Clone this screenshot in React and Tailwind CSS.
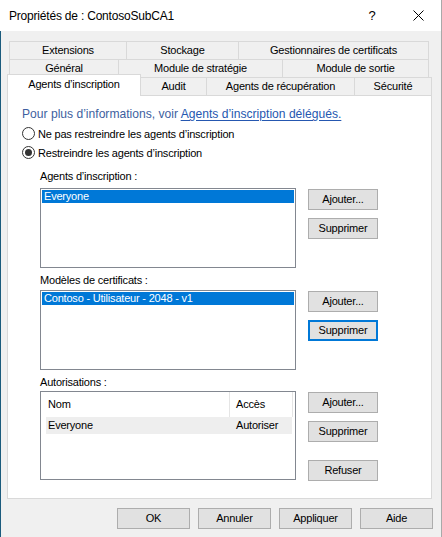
export default function App() {
  const btn =
    "w-[70px] h-[21px] bg-[#e1e1e1] border border-[#adadad] flex items-center justify-center";
  const tab =
    "border-[#d9d9d9] flex items-center justify-center whitespace-nowrap";
  return (
    <div className="relative w-[442px] h-[537px] bg-[#f0f0f0] overflow-hidden flex flex-col border-r border-[#a9a9a9] text-black font-['Liberation_Sans',Arial,sans-serif] text-[11px] tracking-[-0.2px]">
      {/* Title bar */}
      <div className="h-[31px] shrink-0 bg-white flex items-center">
        <span className="pl-[9px] text-[12px] tracking-[-0.2px]">
          Propriétés de : ContosoSubCA1
        </span>
        <div className="ml-auto flex h-full">
          <div className="w-[46px] h-full flex items-center justify-center text-[13px]">
            ?
          </div>
          <div className="w-[46px] h-full flex items-center justify-center">
            <svg width="11" height="11" viewBox="0 0 11 11">
              <path d="M0.5 0.5 L10.5 10.5 M10.5 0.5 L0.5 10.5" stroke="#000" strokeWidth="1" fill="none" />
            </svg>
          </div>
        </div>
      </div>

      {/* Body */}
      <div className="flex-1 border-l border-[#1b5b7d] pl-[6px] pt-[10px]">
        {/* Tabs */}
        <div className="flex h-[18px] ml-[2px]">
          <div className={"w-[117px] border-l border-t " + tab}>Extensions</div>
          <div className={"w-[112px] border-l border-t " + tab}>Stockage</div>
          <div className={"w-[191px] border-l border-t border-r " + tab}>Gestionnaires de certificats</div>
        </div>
        <div className="flex h-[18px] ml-[2px]">
          <div className={"w-[109px] border-l border-t " + tab}>Général</div>
          <div className={"w-[164px] border-l border-t " + tab}>Module de stratégie</div>
          <div className={"w-[147px] border-l border-t border-r " + tab}>Module de sortie</div>
        </div>
        <div className="flex h-[18px] items-end">
          <div className={"relative z-10 w-[134px] h-[22px] -mb-px bg-white border-l border-t border-r pb-[3px] " + tab}>
            Agents d’inscription
          </div>
          <div className={"w-[66px] h-[18px] border-t border-r " + tab}>Audit</div>
          <div className={"w-[148px] h-[18px] border-t border-r " + tab}>Agents de récupération</div>
          <div className={"w-[77px] h-[18px] border-t border-r " + tab}>Sécurité</div>
        </div>

        {/* Panel */}
        <div className="w-[425px] h-[404px] bg-white border border-[#d9d9d9] pl-[14px] pt-[11px]">
          <div className="h-[15px] leading-[15px] whitespace-nowrap text-[12.1px] tracking-normal text-[#3e5fa0]">
            Pour plus d’informations, voir{" "}
            <span className="text-[#2557b0] underline underline-offset-2">
              Agents d’inscription délégués.
            </span>
          </div>
          <div className="mt-[5px] h-[15px] leading-[15px] flex items-start">
            <span className="w-[13px] h-[13px] rounded-full border border-[#333] bg-white" />
            <span className="ml-[3px]">Ne pas restreindre les agents d’inscription</span>
          </div>
          <div className="mt-[4px] h-[15px] leading-[15px] flex items-start">
            <span className="w-[13px] h-[13px] rounded-full border border-[#333] bg-white flex items-center justify-center">
              <span className="w-[7px] h-[7px] rounded-full bg-[#333]" />
            </span>
            <span className="ml-[3px]">Restreindre les agents d’inscription</span>
          </div>

          <div className="pl-[18px]">
            {/* Group 1 */}
            <div className="mt-[8px] h-[15px] leading-[15px]">Agents d’inscription :</div>
            <div className="mt-[4px] flex">
              <div className="w-[256px] h-[80px] border border-[#828790] bg-white p-px">
                <div className="h-[13px] leading-[13px] bg-[#0078d7] text-white pl-[2px]">Everyone</div>
              </div>
              <div className="ml-[12px] pt-px flex flex-col gap-[8px]">
                <div className={btn}>Ajouter...</div>
                <div className={btn}>Supprimer</div>
              </div>
            </div>

            {/* Group 2 */}
            <div className="mt-[5px] h-[15px] leading-[15px]">Modèles de certificats :</div>
            <div className="mt-[2px] flex">
              <div className="w-[256px] h-[80px] border border-[#828790] bg-white p-px">
                <div className="h-[13px] leading-[13px] bg-[#0078d7] text-white pl-[2px]">
                  Contoso - Utilisateur - 2048 - v1
                </div>
              </div>
              <div className="ml-[12px] pt-px flex flex-col gap-[8px]">
                <div className={btn}>Ajouter...</div>
                <div className="w-[70px] h-[21px] bg-[#e1e1e1] border-2 border-[#0078d7] flex items-center justify-center">
                  Supprimer
                </div>
              </div>
            </div>

            {/* Group 3 */}
            <div className="mt-[5px] h-[15px] leading-[15px]">Autorisations :</div>
            <div className="mt-px flex">
              <div className="w-[256px] h-[89px] border border-[#828790] bg-white">
                <div className="flex h-[25px]">
                  <div className="w-[189px] border-r border-[#e5e5e5] pl-[7px] flex items-center">Nom</div>
                  <div className="w-[63px] border-r border-[#e5e5e5] pl-[6px] flex items-center">Accès</div>
                </div>
                <div className="ml-[5px] w-[246px] h-[17px] bg-[#eeeeee] flex items-center">
                  <div className="w-[184px] pl-[2px]">Everyone</div>
                  <div className="pl-[6px]">Autoriser</div>
                </div>
              </div>
              <div className="ml-[12px] pt-px flex flex-col">
                <div className={btn}>Ajouter...</div>
                <div className={"mt-[8px] " + btn}>Supprimer</div>
                <div className={"mt-[18px] " + btn}>Refuser</div>
              </div>
            </div>
          </div>
        </div>

        {/* Bottom buttons */}
        <div className="mt-[9px] ml-[110px] flex gap-[8px]">
          <div className="w-[73px] h-[21px] bg-[#e1e1e1] border border-[#adadad] flex items-center justify-center">OK</div>
          <div className="w-[73px] h-[21px] bg-[#e1e1e1] border border-[#adadad] flex items-center justify-center">Annuler</div>
          <div className="w-[73px] h-[21px] bg-[#e1e1e1] border border-[#adadad] flex items-center justify-center">Appliquer</div>
          <div className="w-[73px] h-[21px] bg-[#e1e1e1] border border-[#adadad] flex items-center justify-center">Aide</div>
        </div>
      </div>
    </div>
  );
}
